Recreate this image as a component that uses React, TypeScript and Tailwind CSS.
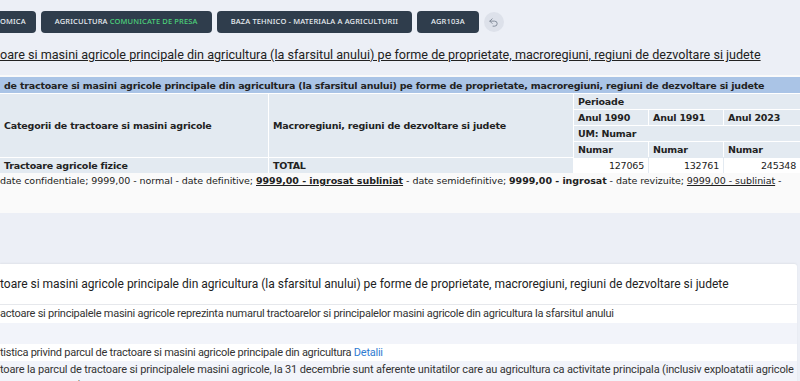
import { Undo2 } from "lucide-react";

const navBtn =
  "flex h-[22px] items-center rounded-[4px] bg-[#2f3d4c] px-[14px] text-[7.5px] font-medium uppercase tracking-[0.02em] text-[#e8edf2] whitespace-nowrap";

const th = "bg-[#e3eaf1] px-[4px] text-left font-bold align-middle whitespace-nowrap overflow-hidden";

export default function App() {
  return (
    <div className="h-[381px] w-[800px] overflow-hidden bg-[#eceff6] text-[#222]" style={{ fontFamily: "'Noto Sans', sans-serif" }}>
      {/* top navigation */}
      <div className="flex items-center gap-[5px] pt-[11px]">
        <div className={navBtn + " rounded-l-none pl-0 pr-[10px]"}>OMICA</div>
        <div className={navBtn}>
          Agricultura&nbsp;<span className="text-[#4cd07a]">Comunicate de presa</span>
        </div>
        <div className={navBtn}>Baza tehnico - materiala a agriculturii</div>
        <div className={navBtn}>AGR103A</div>
        <button className="flex h-[20px] w-[20px] items-center justify-center rounded-full bg-[#dde1ea] text-[#7c8594]">
          <Undo2 size={11} strokeWidth={2} />
        </button>
      </div>

      {/* title */}
      <div className="mt-[12px] h-[24px] whitespace-nowrap text-[12.6px] leading-[20px] underline" style={{ fontFamily: "Roboto, sans-serif" }}>
        oare si masini agricole principale din agricultura (la sfarsitul anului) pe forme de proprietate, macroregiuni, regiuni de dezvoltare si judete
      </div>

      {/* table panel */}
      <div
        className="mt-[6px] h-[138px] bg-[#fafafa] pt-[2px] text-[9.5px] tracking-[-0.2px]"
        style={{ fontFamily: "'DejaVu Sans', Verdana, sans-serif" }}
      >
        <table className="w-[800px] table-fixed border-separate border-spacing-0 leading-[15px]">
          <colgroup>
            <col className="w-[269px]" />
            <col className="w-[305px]" />
            <col className="w-[75px]" />
            <col className="w-[75px]" />
            <col className="w-[76px]" />
          </colgroup>
          <tbody>
            <tr>
              <td colSpan={5} className="h-[16px] overflow-hidden whitespace-nowrap bg-[#aac4e6] px-[4px] font-bold">
                de tractoare si masini agricole principale din agricultura (la sfarsitul anului) pe forme de proprietate, macroregiuni, regiuni de dezvoltare si judete
              </td>
            </tr>
            <tr>
              <td rowSpan={4} className={th + " border-t border-r border-white"}>Categorii de tractoare si masini agricole</td>
              <td rowSpan={4} className={th + " border-t border-r border-white"}>Macroregiuni, regiuni de dezvoltare si judete</td>
              <td colSpan={3} className={th + " h-[16px] border-t border-white"}>Perioade</td>
            </tr>
            <tr>
              <td className={th + " h-[16px] border-t border-r border-white"}>Anul 1990</td>
              <td className={th + " border-t border-r border-white"}>Anul 1991</td>
              <td className={th + " border-t border-white"}>Anul 2023</td>
            </tr>
            <tr>
              <td colSpan={3} className={th + " h-[16px] border-t border-white"}>UM: Numar</td>
            </tr>
            <tr>
              <td className={th + " h-[16px] border-t border-r border-white"}>Numar</td>
              <td className={th + " border-t border-r border-white"}>Numar</td>
              <td className={th + " border-t border-white"}>Numar</td>
            </tr>
            <tr>
              <td className={th + " h-[16px] border-t border-r border-white"}>Tractoare agricole fizice</td>
              <td className={th + " border-t border-r border-white"}>TOTAL</td>
              <td className="border-t border-r border-[#e3eaf1] bg-white px-[4px] text-right">127065</td>
              <td className="border-t border-r border-[#e3eaf1] bg-white px-[4px] text-right">132761</td>
              <td className="border-t border-[#e3eaf1] bg-white px-[4px] text-right">245348</td>
            </tr>
          </tbody>
        </table>
        <div className="mt-[1px] whitespace-nowrap leading-[14px] tracking-[-0.05px]">
          date confidentiale; 9999,00 - normal - date definitive; <b className="underline">9999,00 - ingrosat subliniat</b> - date semidefinitive;{" "}
          <b>9999,00 - ingrosat</b> - date revizuite; <span className="underline">9999,00 - subliniat</span> -
        </div>
      </div>

      {/* metadata panel */}
      <div className="mt-[51px] mr-[3px] h-[200px] rounded-tr-[3px] bg-white shadow-[0_-1px_2px_rgba(0,0,0,0.05)]">
        <div className="flex h-[41px] items-center whitespace-nowrap border-b border-[#e6e8ec] text-[12px]" style={{ fontFamily: "Roboto, sans-serif" }}>
          toare si masini agricole principale din agricultura (la sfarsitul anului) pe forme de proprietate, macroregiuni, regiuni de dezvoltare si judete
        </div>
        <div className="text-[11px] leading-[16px] tracking-[-0.25px] text-[#333]" style={{ fontFamily: "Roboto, sans-serif" }}>
          <div className="flex h-[18px] items-center whitespace-nowrap bg-white">
            actoare si principalele masini agricole reprezinta numarul tractoarelor si principalelor masini agricole din agricultura la sfarsitul anului
          </div>
          <div className="h-[21px] bg-[#f2f4fa]" />
          <div className="flex h-[17px] items-center whitespace-nowrap bg-white">
            tistica privind parcul de tractoare si masini agricole principale din agricultura&nbsp;<span className="text-[#2f7bd1]">Detalii</span>
          </div>
          <div className="bg-[#f2f4fa] pt-[1px] leading-[16px] tracking-[-0.15px]">
            <div className="whitespace-nowrap">
              toare la parcul de tractoare si principalele masini agricole, la 31 decembrie sunt aferente unitatilor care au agricultura ca activitate principala (inclusiv exploatatii agricole
            </div>
            <div className="whitespace-nowrap">itati ale acestora) si unitatilor care au si alte activitati principale</div>
          </div>
        </div>
      </div>
    </div>
  );
}
